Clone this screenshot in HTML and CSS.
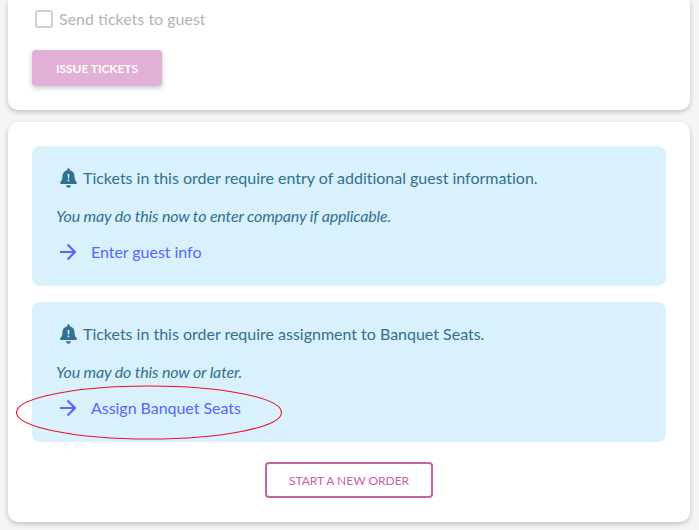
FILE: index.html
```html
<!DOCTYPE html>
<html lang="en">
<head>
<meta charset="utf-8">
<title>Order</title>
<link rel="stylesheet" href="styles.css">
</head>
<body>
<section class="card card-top">
  <label class="check"><span class="box"></span><span>Send tickets to guest</span></label>
  <button class="btn-issue" type="button">ISSUE TICKETS</button>
</section>
<section class="card card-main">
  <div class="alert">
    <p class="alert-head">
      <svg class="bell" viewBox="0 0 448 512" width="17" height="20"><path fill="#31708f" d="M224 512c35 0 64-29 64-64H160c0 35 29 64 64 64zm215-150c-19-21-55-52-55-154 0-78-54-140-128-155V32a32 32 0 0 0-64 0v21C118 68 64 130 64 208c0 102-36 133-55 154-6 6-9 14-9 22 0 16 13 32 32 32h384c19 0 32-16 32-32 0-8-3-16-9-22z"/><path fill="#d9f1fc" d="M200 150h48l-6 120h-36zM224 295a24 24 0 1 1 0 48 24 24 0 0 1 0-48z"/></svg>
      <span>Tickets in this order require entry of additional guest information.</span>
    </p>
    <p class="alert-note">You may do this now to enter company if applicable.</p>
    <a class="alert-link" href="#">
      <svg class="arrow" viewBox="0 0 18 18" width="18" height="18"><path d="M1 9h15M8.500 1.500 16 9l-7.500 7.500" fill="none" stroke="#5468ff" stroke-width="2.200"/></svg>
      <span>Enter guest info</span>
    </a>
  </div>
  <div class="alert">
    <p class="alert-head">
      <svg class="bell" viewBox="0 0 448 512" width="17" height="20"><path fill="#31708f" d="M224 512c35 0 64-29 64-64H160c0 35 29 64 64 64zm215-150c-19-21-55-52-55-154 0-78-54-140-128-155V32a32 32 0 0 0-64 0v21C118 68 64 130 64 208c0 102-36 133-55 154-6 6-9 14-9 22 0 16 13 32 32 32h384c19 0 32-16 32-32 0-8-3-16-9-22z"/><path fill="#d9f1fc" d="M200 150h48l-6 120h-36zM224 295a24 24 0 1 1 0 48 24 24 0 0 1 0-48z"/></svg>
      <span>Tickets in this order require assignment to Banquet Seats.</span>
    </p>
    <p class="alert-note">You may do this now or later.</p>
    <a class="alert-link" href="#">
      <svg class="arrow" viewBox="0 0 18 18" width="18" height="18"><path d="M1 9h15M8.500 1.500 16 9l-7.500 7.500" fill="none" stroke="#5468ff" stroke-width="2.200"/></svg>
      <span>Assign Banquet Seats</span>
    </a>
  </div>
  <div class="actions"><button class="btn-new" type="button">START A NEW ORDER</button></div>
</section>
<svg class="annotation" viewBox="0 0 268 56" width="268" height="56"><ellipse cx="133" cy="27.500" rx="132.500" ry="26.500" fill="none" stroke="#ee0f22" stroke-width="1.100"/></svg>
</body>
</html>
```
FILE: styles.css
```css
* { box-sizing: border-box; }
html, body { height: 100%; }
body {
  margin: 0;
  padding: 0 9px 0 8px;
  background: #f4f5f7;
  font-family: Lato, "Open Sans", sans-serif;
  font-size: 16px;
  overflow: hidden;
  position: relative;
}
.card {
  background: #fff;
  border-radius: 0 0 10px 10px;
  box-shadow: 0 2px 5px rgba(0, 0, 0, 0.22);
}
.card-top {
  height: 110px;
  padding: 10px 24px 0;
  display: flex;
  flex-direction: column;
  align-items: flex-start;
}
.card-main {
  margin-top: 12px;
  height: 400px;
  padding: 24px 24px 0;
  border-radius: 10px;
}
.check {
  display: flex;
  align-items: center;
  gap: 6px;
  margin-left: 3px;
  height: 18px;
  color: #b4b4b4;
  line-height: 18px;
}
.box {
  width: 18px;
  height: 18px;
  border: 2px solid #d0d0d0;
  border-radius: 3px;
  background: #fff;
}
.btn-issue {
  margin-top: 22px;
  width: 130px;
  height: 36px;
  border: 0;
  border-radius: 4px;
  background: #e3b0d5;
  color: #fff;
  font: 700 12px Lato, sans-serif;
  letter-spacing: -0.05px;
  box-shadow: 0 2px 5px rgba(0, 0, 0, 0.22);
  padding: 0;
}
.alert {
  height: 140px;
  margin-bottom: 16px;
  padding: 22px 24px 0;
  background: #d9f1fc;
  border-radius: 8px;
  color: #31708f;
}
.alert p { margin: 0; }
.alert-head {
  display: flex;
  align-items: center;
  gap: 6px;
  height: 20px;
  padding-left: 4px;
  line-height: 20px;
  letter-spacing: -0.01px;
}
.bell { flex: none; }
.alert-note {
  margin-top: 18px !important;
  height: 20px;
  line-height: 20px;
  font-style: italic;
  letter-spacing: -0.16px;
}
.alert-link {
  display: flex;
  align-items: center;
  gap: 14px;
  height: 20px;
  margin-top: 16px;
  padding-left: 3px;
  line-height: 20px;
  color: #5468ff;
  text-decoration: none;
  letter-spacing: -0.04px;
}
.arrow { flex: none; }
.actions {
  display: flex;
  justify-content: center;
  margin-top: 20px;
}
.btn-new {
  width: 168px;
  height: 36px;
  border: 2px solid #c761a8;
  border-radius: 4px;
  background: #fff;
  color: #c761a8;
  font: 400 12px Lato, sans-serif;
  letter-spacing: -0.02px;
  padding: 0;
}
.annotation {
  position: absolute;
  left: 16px;
  top: 385px;
}
```
